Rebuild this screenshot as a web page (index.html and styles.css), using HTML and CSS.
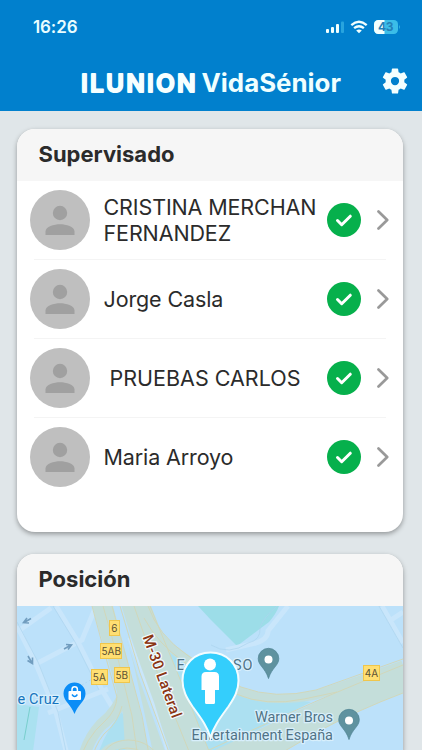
FILE: index.html
```
<!DOCTYPE html>
<html lang="es">
<head>
<meta charset="utf-8">
<meta name="viewport" content="width=device-width, initial-scale=1">
<title>ILUNION VidaSénior</title>
<link rel="stylesheet" href="styles.css">
</head>
<body>
<svg class="defs" width="0" height="0" aria-hidden="true">
  <symbol id="avatar" viewBox="0 0 60 60">
    <circle cx="30" cy="30" r="30" fill="#bfbfbf"/>
    <circle cx="30" cy="23" r="7.2" fill="#a0a0a0"/>
    <path d="M15.5 45v-3.500c0-5 8.500-7.300 14.500-7.300s14.500 2.300 14.500 7.300V45z" fill="#a0a0a0"/>
  </symbol>
  <symbol id="check" viewBox="0 0 34 34">
    <circle cx="17" cy="17" r="17" fill="#06b04c"/>
    <path d="M10.500 17.500l4.200 4.200 8.600-8.500" fill="none" stroke="#fff" stroke-width="3" stroke-linecap="round" stroke-linejoin="round"/>
  </symbol>
  <symbol id="chevron" viewBox="0 0 12 20">
    <path d="M1.500 1.500L10.200 10l-8.700 8.500" fill="none" stroke="#999" stroke-width="2.700" stroke-linecap="round" stroke-linejoin="round"/>
  </symbol>
</svg>
<header class="top">
  <div class="status">
    <span class="time">16:26</span>
    <svg class="signals" width="76" height="16" viewBox="325 19 76 16">
      <g fill="#f2fffe"><rect x="326" y="29" width="3" height="4" rx="1"/><rect x="331" y="27" width="3" height="6" rx="1"/><rect x="336" y="24" width="3" height="9" rx="1"/></g>
      <rect x="341" y="21.500" width="3" height="11.500" rx="1" fill="#28a4de"/>
      <g fill="none" stroke="#f2fffe" stroke-width="2.300">
        <path d="M351.300 25.200q7.700-6.800 15.400 0"/><path d="M354.100 28.200q4.900-4 9.800 0"/>
      </g>
      <path d="M356.200 30.500q2.800-2.200 5.600 0L359 33.200z" fill="#f2fffe"/>
      <rect x="374" y="20" width="24" height="14" rx="4.200" fill="#3bbde8"/>
      <path d="M384.500 20h-6.300a4.200 4.200 0 0 0-4.200 4.200v5.600a4.200 4.200 0 0 0 4.200 4.200h6.300z" fill="#f2fffe"/>
      <path d="M399 24.800q1.800 2.200 0 4.400z" fill="#3bbde8"/>
      <text class="battery" x="378" y="31.200" textLength="15.500">43</text>
    </svg>
  </div>
  <div class="bar">
    <svg class="brand" width="264" height="36" viewBox="80 65 264 36">
      <text class="logo" x="81" y="92" textLength="114.500">ILUNION</text>
      <text class="product" x="201.500" y="92" textLength="139.500" lengthAdjust="spacingAndGlyphs">VidaSénior</text>
    </svg>
    <svg class="gear" width="30" height="30" viewBox="0 0 24 24"><path fill="#f4ffff" d="M19.430 12.980c.04-.32.07-.64.07-.98s-.03-.66-.07-.98l2.110-1.650c.19-.15.24-.42.12-.64l-2-3.460c-.12-.22-.39-.3-.61-.22l-2.490 1c-.52-.4-1.080-.73-1.690-.98l-.38-2.650A.488.488 0 0 0 14 2h-4c-.25 0-.46.18-.49.42l-.38 2.650c-.61.25-1.170.59-1.690.98l-2.490-1c-.23-.09-.49 0-.61.22l-2 3.460c-.13.22-.07.49.12.64l2.110 1.650c-.04.32-.07.65-.07.98s.03.66.07.98l-2.110 1.650c-.19.15-.24.42-.12.64l2 3.460c.12.22.39.3.61.22l2.490-1c.52.4 1.080.73 1.690.98l.38 2.650c.03.24.24.42.49.42h4c.25 0 .46-.18.49-.42l.38-2.650c.61-.25 1.170-.59 1.690-.98l2.490 1c.23.09.49 0 .61-.22l2-3.460c.12-.22.07-.49-.12-.64zM12 15.300a3.300 3.300 0 1 1 0-6.600 3.300 3.300 0 0 1 0 6.600z"/></svg>
  </div>
</header>
<main class="content">
  <section class="card people">
    <h2 class="card-title">Supervisado</h2>
    <ul class="list">
      <li class="row"><svg class="avatar"><use href="#avatar"/></svg><span class="name">CRISTINA MERCHAN<br>FERNANDEZ</span><svg class="check"><use href="#check"/></svg><svg class="chevron"><use href="#chevron"/></svg></li>
      <li class="row"><svg class="avatar"><use href="#avatar"/></svg><span class="name">Jorge Casla</span><svg class="check"><use href="#check"/></svg><svg class="chevron"><use href="#chevron"/></svg></li>
      <li class="row"><svg class="avatar"><use href="#avatar"/></svg><span class="name indent">PRUEBAS CARLOS</span><svg class="check"><use href="#check"/></svg><svg class="chevron"><use href="#chevron"/></svg></li>
      <li class="row"><svg class="avatar"><use href="#avatar"/></svg><span class="name">Maria Arroyo</span><svg class="check"><use href="#check"/></svg><svg class="chevron"><use href="#chevron"/></svg></li>
    </ul>
  </section>
  <section class="card position">
    <h2 class="card-title">Posición</h2>
    <svg class="map" width="386" height="160" viewBox="17 606 386 160">
      <rect x="17" y="606" width="386" height="160" fill="#bce1fa"/>
      <!-- parks -->
      <path d="M211 606h68q-3 8-10 16l-32 24q-15-15-26-26z" fill="#9cdde8"/>
      <path d="M198 606h13v14z" fill="#9cdde8"/>
      <path d="M17 704l22 3-8 59H17z" fill="#aae1f0"/>
      <path d="M24 740l6-33" stroke="#78cfcd" fill="none"/>
      <path d="M146 606q12 34 46 52l20 20 35 16 64 8-54 28-62 36h-30z" fill="#ace0f1"/>
      <path d="M122 712l16 42H98q8-24 24-42z" fill="#ace0f1"/>
      <!-- local streets -->
      <g fill="none" stroke="#c9e6fb" stroke-width="5">
        <path d="M17 626l19 38 20 48 14 54M56 606l22 36 24 48 12 20M34 665l48-25 14-34M17 632l34-24M48 713l60-24M226 650l30-7q12-4 12-12l20-25"/>
        <path d="M382 606l21 37M388 622l15-10"/>
      </g>
      <g fill="none" stroke="#acd4ee" stroke-width=".7">
        <path d="M17 622l21 40 20 50 11 54M53 606l22 36 24 48M211 645q18 11 37-2 13-3 12-15 2-9 17-22M379 606l24 42"/>
        <path d="M82 685l17-10" stroke-dasharray="2 2"/>
      </g>
      <!-- motorways -->
      <g fill="none" stroke-linejoin="round">
        <path d="M92 606h21l14 52 15 60 9 48h-25l-3-52-15-54z" fill="#c4deda"/>
        <path d="M118 606h33l31 78 33 82h-59l-22-100z" fill="#c4deda"/>
        <path d="M119 606l21 68 33 92" stroke="#bce1fa" stroke-width="5"/>
        <path d="M129 638l24 66 19 62" stroke="#c9e6fb" stroke-width="3"/>
        <path d="M144 606q9 32 41 52 23 18 52 32t79 5q43-14 87-30" stroke="#c4deda" stroke-width="9"/>
        <path d="M403 665v28q-45 17-84 38l-60 35h-78q54-25 104-49l62-30q29-9 56-22z" fill="#c4deda"/>
        <path d="M125 690q-5 20-24 35-15 16-19 41" stroke="#c4deda" stroke-width="12"/>
        <path d="M99 760q8-16 27-16 22 0 35 22" stroke="#c4deda" stroke-width="8"/>
        <g stroke="#d1d7ba" stroke-width="1">
          <path d="M92 606l14 52 11 39q-1 14-12 24-20 17-27 45M112 606l15 54 15 56 9 50M120 606l20 67 34 93M134 606l26 74 35 86M150 606l32 78 33 82M103 606l14 49 15 61 7 50"/>
          <path d="M148 606q10 29 39 49 26 19 54 32 34 13 75 3l87-31M144 618q14 26 40 44 26 20 52 32 30 13 68 5l33-7"/>
          <path d="M403 665l-39 16-36 15q-50 22-132 60M403 693q-45 17-84 38l-60 35M122 706q-4 17-18 28-10 12-14 32M96 766q10-26 32-26 24 0 37 26M105 766q8-18 22-18 18 0 30 18"/>
        </g>
      </g>
      <g fill="none" stroke="#719dbf" stroke-width="1.600">
        <path d="M31 618.500l-7 4M27 618l-3.500 4.500 5.500.5M64 649l7-4M66 644.500l5.500.5-3.500 4.500M28 656l4 7M32.500 657.500l0 6-5-3"/>
      </g>
      <!-- exit signs -->
      <g class="shield">
        <rect x="109.500" y="620.500" width="10" height="15"/><rect x="100.500" y="643.500" width="21" height="15"/><rect x="91.500" y="669.500" width="16" height="15"/><rect x="114.500" y="667.500" width="15" height="15"/><rect x="363.500" y="665.500" width="16" height="15"/>
      </g>
      <g class="shield-text">
        <text x="114.300" y="632">6</text><text x="111.200" y="655">5AB</text><text x="99.300" y="681">5A</text><text x="121.800" y="679">5B</text><text x="371.500" y="677">4A</text>
      </g>
      <text class="road" transform="translate(142.500 637) rotate(70)" textLength="87">M-30 Lateral</text>
      <text class="place shop" x="17.500" y="704" textLength="41.500">e Cruz</text>
      <g class="place">
        <text x="176.500" y="669.500">E</text><text x="233" y="669.500" textLength="19.500">SO</text>
        <text x="255" y="721.500" textLength="78">Warner Bros</text>
        <text x="191.500" y="739.500" textLength="141.500">Entertainment España</text>
      </g>
      <path d="M74.500 682.500a11 11 0 0 1 11 11c0 8-7 10-11 20.500-4-10.500-11-12.500-11-20.500a11 11 0 0 1 11-11z" fill="#0b8df6"/>
      <rect x="68.500" y="691" width="12.500" height="9" rx="1" fill="#fff"/>
      <path d="M72 691v-1.500a2.700 2.700 0 0 1 5.400 0v1.500" fill="none" stroke="#fff" stroke-width="1.500"/>
      <path d="M72 694.500q2.700 4 5.400 0" fill="none" stroke="#0b8df6" stroke-width="1.400"/>
      <g fill="#5f929f" stroke="#4d8392" stroke-width=".7">
        <path d="M268.500 648.300a10.300 10.300 0 0 1 10.300 10.300c0 7-7 9-10.300 20-3.300-11-10.300-13-10.300-20a10.300 10.300 0 0 1 10.300-10.300z"/>
        <path d="M349 709.300a10.300 10.300 0 0 1 10.300 10.300c0 7-7 9-10.300 20-3.300-11-10.300-13-10.300-20a10.300 10.300 0 0 1 10.300-10.300z"/>
      </g>
      <circle cx="268.500" cy="659.500" r="4" fill="#fff"/><circle cx="349" cy="720.500" r="4" fill="#fff"/>
      <!-- current position -->
      <path d="M210.500 652.500c16 0 28 12 28 28 0 10-4 17-10 26-8 11-15 20-18 31-3-11-10-20-18-31-6-9-10-16-10-26 0-16 12-28 28-28z" fill="#34cefc" stroke="#f2fcff" stroke-width="2"/>
      <circle cx="210" cy="664.500" r="6" fill="#fff"/>
      <path d="M206 672h8.500q4.500 0 4.500 4.500V690h-4v12.500q0 1.500-1.500 1.500h-7q-1.500 0-1.500-1.500V690h-3.500v-13.500q0-4.500 4.500-4.500z" fill="#fff"/>
    </svg>
  </section>
</main>
</body>
</html>
```
FILE: styles.css
```
* { box-sizing: border-box; }
html, body { height: 100%; }
body {
  margin: 0;
  display: flex;
  flex-direction: column;
  height: 750px;
  overflow: hidden;
  background: #e0e6e9;
  color: #2b2b2b;
  font-family: Inter, "Liberation Sans", sans-serif;
}
svg { display: block; flex: none; }
.defs { position: absolute; }
.top { flex: none; height: 111px; background: #0180cd; }
.status {
  display: flex;
  justify-content: space-between;
  height: 65px;
  padding: 19px 21px 0 33px;
}
.time { color: #e9fdff; font-size: 17px; font-weight: 600; line-height: 17px; letter-spacing: -.1px; }
.battery { font-size: 12px; font-weight: 700; fill: #2380b8; }
.bar { display: flex; height: 46px; padding: 0 12px 0 80px; justify-content: space-between; }
.brand { overflow: visible; }
.gear { margin-top: 1px; }
.logo {
  font: 600 24.500px Inter, sans-serif;
  fill: #f6ffff;
  stroke: #f6ffff;
  stroke-width: 1.800;
  stroke-linejoin: round;
}
.product { font: 700 25px Inter, "Liberation Sans", sans-serif; fill: #f0ffff; }
.content { display: flex; flex-direction: column; gap: 22px; padding: 18px 19px 0 17px; }
.card {
  flex: none;
  overflow: hidden;
  border-radius: 18px;
  background: #fff;
  box-shadow: 0 2px 5px rgba(0, 0, 0, .35);
}
.people { height: 403px; }
.position { height: 212px; }
.card-title {
  margin: 0;
  height: 52px;
  padding-left: 21.500px;
  background: #f6f6f6;
  font-size: 22px;
  font-weight: 700;
  line-height: 51px;
  letter-spacing: 0;
}
.list { list-style: none; margin: 0; padding: 0 14px 0 13px; }
.row {
  display: flex;
  align-items: center;
  height: 79px;
  padding-bottom: 2px;
  background: linear-gradient(#f4f4f4, #f4f4f4) 4px 100% / 352px 1px no-repeat;
}
.row:last-child { background: none; }
.avatar { width: 60px; height: 60px; }
.name { width: 224px; padding-left: 13.500px; font-size: 21.500px; line-height: 26px; letter-spacing: -.12px; white-space: nowrap; }
.indent { padding-left: 19.500px; letter-spacing: 0; }
.check { width: 34px; height: 34px; margin-left: 13px; }
.chevron { width: 12px; height: 20px; margin-left: 16px; }
.shield { fill: #ffdf72; stroke: #efc64d; }
.shield-text { font-size: 10px; font-weight: 400; fill: #5b5134; text-anchor: middle; }
.road, .place {
  font-family: Roboto, sans-serif;
  font-size: 15px;
  paint-order: stroke;
  stroke: #d8effc;
  stroke-width: 2.500px;
  stroke-linejoin: round;
}
.road { fill: #8b3513; font-weight: 500; stroke: #f2fafd; }
.place { fill: #507386; font-size: 14.500px; }
.shop { fill: #1674be; }
```
